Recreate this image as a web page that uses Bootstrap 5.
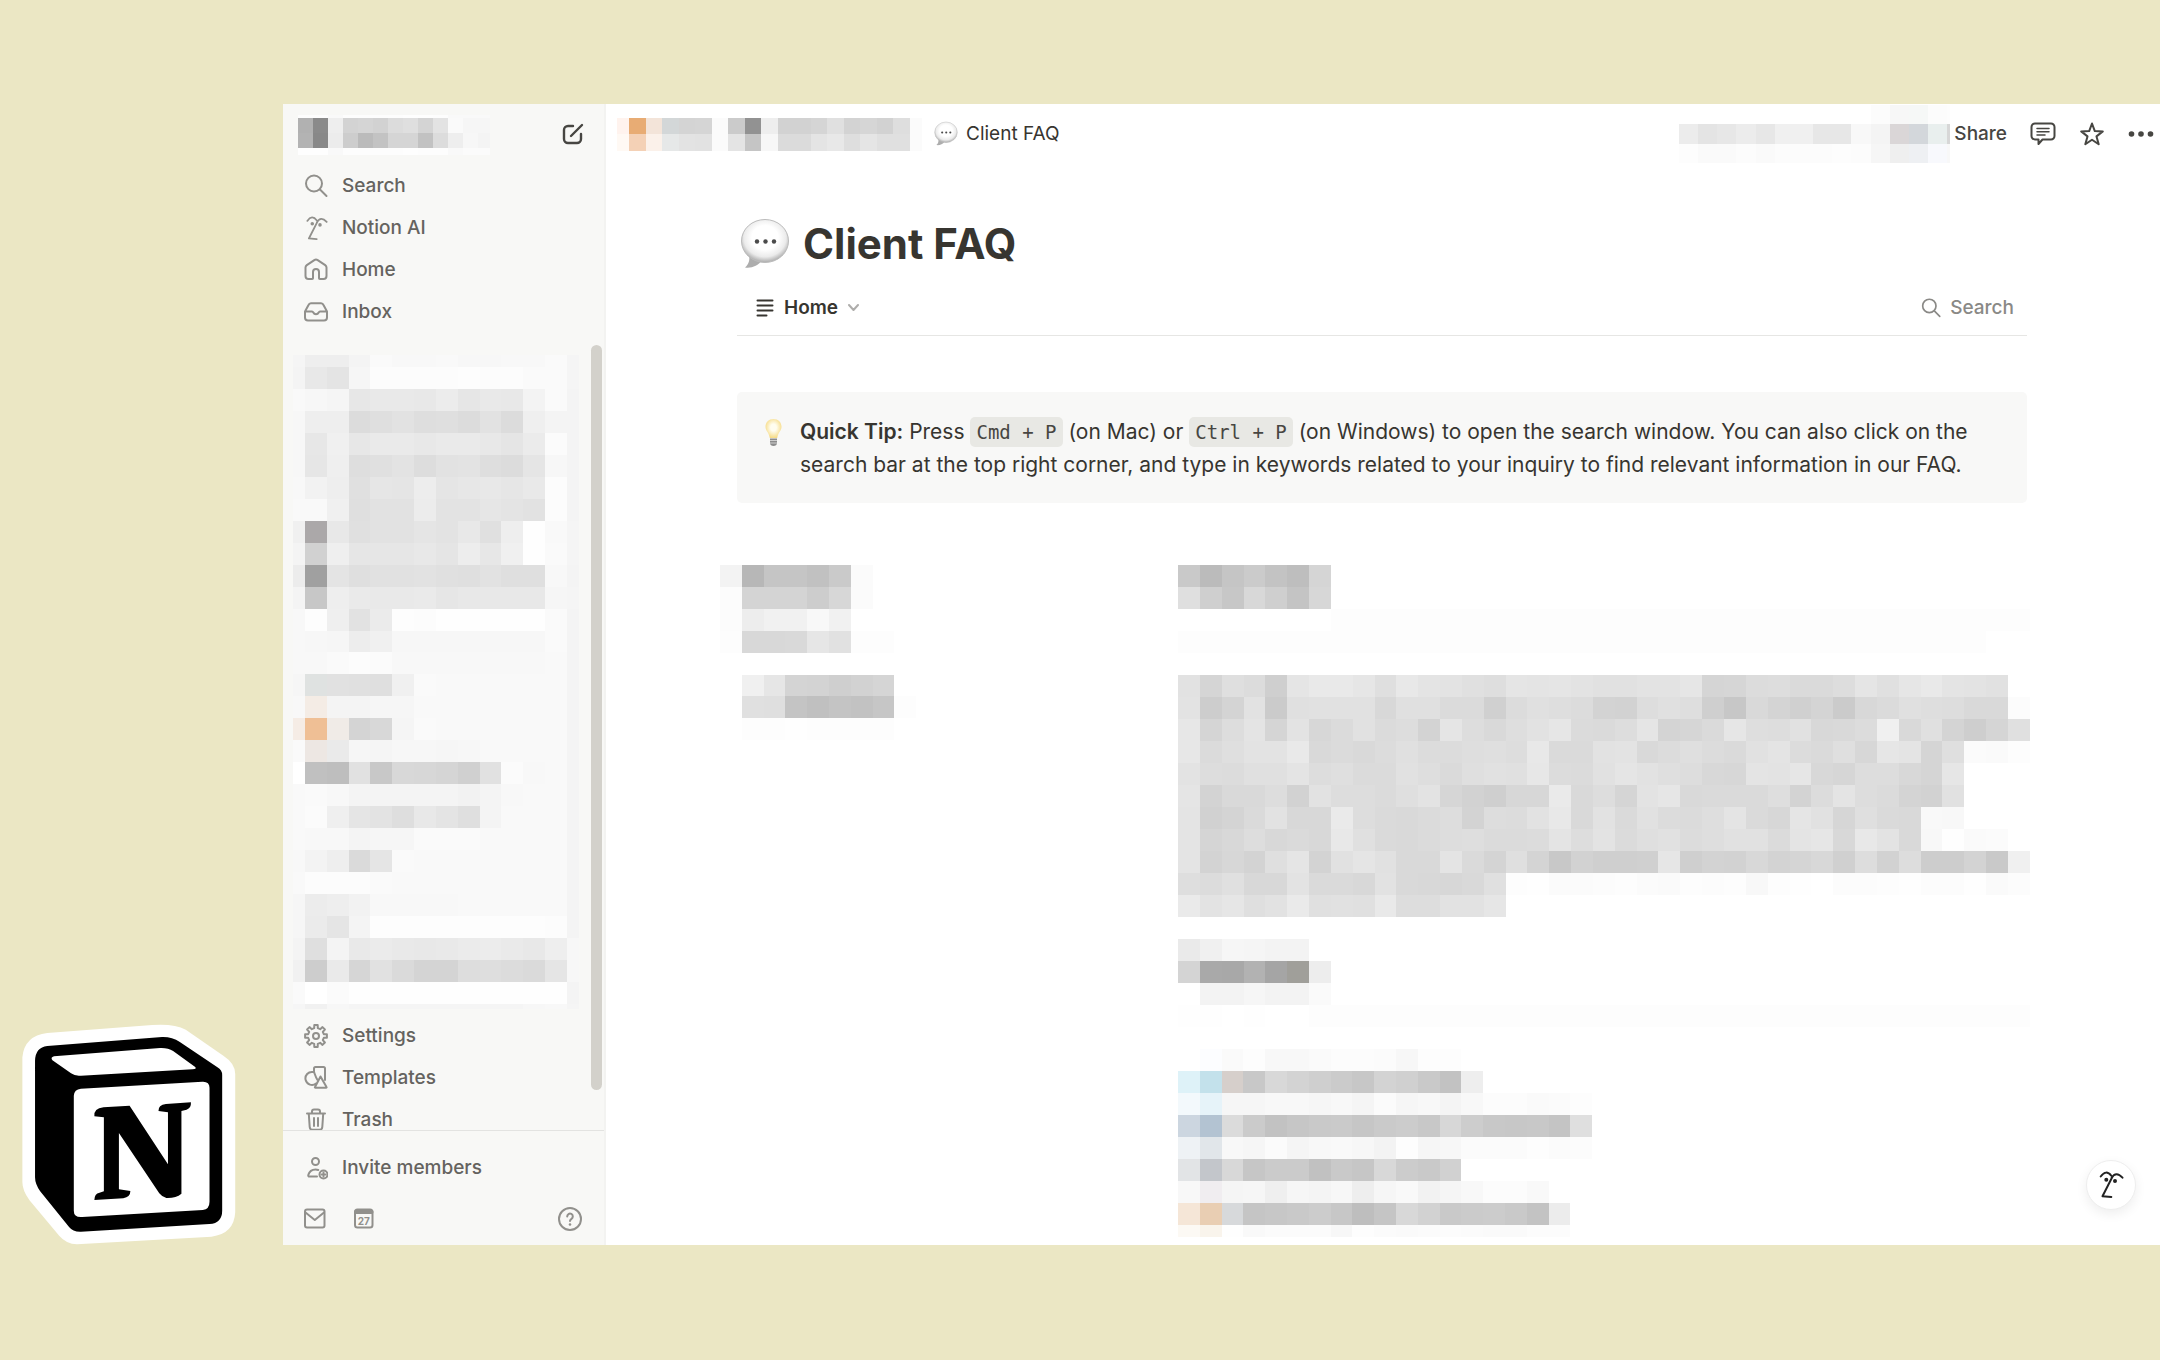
<!DOCTYPE html>
<html lang="en">
<head>
<meta charset="utf-8">
<meta name="viewport" content="width=device-width, initial-scale=1">
<title>Client FAQ</title>
<link href="https://cdn.jsdelivr.net/npm/bootstrap@5.3.0/dist/css/bootstrap.min.css" rel="stylesheet">
<style>
  body{background:#ebe7c4;color:#373530;font-family:Inter,"Liberation Sans",sans-serif;font-size:19px;line-height:28px}
  svg{display:block;flex:none}
  a,button{color:inherit;text-decoration:none}
  .stage{padding:104px 0 115px}
  .sticker-rail{width:283px;flex:none;padding-left:20px}
  .side{width:323px;flex:none;background:#f8f8f6;border-right:2px solid #f3f3f1;color:#65635f;font-weight:500}
  .side-head{height:61px;flex:none;padding:11px 19px 0 15px}
  .side-head button{color:#474642;margin-top:7px}
  .side-nav{min-height:0}
  .side-item{height:42px;padding-left:21px;gap:14px}
  .side nav svg.ico,.side-foot svg.ico{color:#91908c}
  .side-mosaic{margin:22px 0 6px 10px}
  .scroll-thumb{position:absolute;top:241px;right:2px;bottom:155px;width:11px;border-radius:6px;background:#d3d1cb}
  .side-foot{height:115px;flex:none;border-top:1px solid #e3e3e1;padding-top:16px}
  .foot-icons{padding:18px 22px 0 21px;gap:12px}
  .ico{fill:none;stroke:currentColor;stroke-width:2;stroke-linecap:round;stroke-linejoin:round}
  .plain{background:none;border:0;padding:0}
  .board{min-width:0}
  .top-line{height:59px;padding:1px 6px 0 11px}
  .top-right{gap:23px;color:#474642}
  .page{padding:55px 133px 0 131px}
  .title-row{gap:14px;padding-left:4px;height:52px}
  .title-row h1{font-size:42px;line-height:52px;font-weight:700;margin:0}
  .tab-line{height:56px;margin-top:10px;border-bottom:1px solid #e6e6e4;padding:0 13px 0 19px}
  .tab-line .home{gap:10px;font-weight:600}
  .tab-line .find{gap:9px;color:#8a8986;font-weight:500}
  .tip{margin-top:56px;background:#f8f8f7;border-radius:5px;padding:23px 24px 22px 28px;gap:18px;font-size:21px;line-height:33px}
  .tip p{margin:0}
  .tip strong{font-weight:600}
  .tip code{background:#e8e8e4;color:#474642;border-radius:5px;padding:4px 6px;font:19px/22px "DejaVu Sans Mono",monospace}
  .columns{margin-top:62px}
  .col-a{width:441px;flex:none}
  .col-a svg{margin-left:-17px}
  .blocks{gap:22px}
  .fab{position:absolute;right:24px;bottom:35px;width:50px;height:50px;border-radius:50%;background:#fff;border:1px solid #eee;box-shadow:0 4px 12px rgba(0,0,0,.07);color:#222}
</style>
</head>
<body>
<div class="stage d-flex vh-100 overflow-hidden">
  <div class="sticker-rail d-flex align-items-end">
    <svg width="218" height="221" viewBox="51 75 551 663" preserveAspectRatio="none" role="img" aria-label="Notion">
      <path fill="#fff" d="M120 102 L385 78 Q440 73 470 92 L565 170 Q595 193 595 225 L595 640 Q592 705 535 713 L195 736 Q168 735 150 710 L75 604 Q57 575 57 550 L57 175 Q62 110 120 102Z"/>
      <path fill="#000" d="M120 141 L410 114 Q435 113 455 129 L550 205 Q562 213 562 228 L562 635 Q562 672 530 675 L205 698 Q185 699 175 684 L102 577 Q89 555 89 535 L89 185 Q90 145 120 141Z"/>
      <path fill="#fff" d="M137 172 L405 147 Q425 146 438 156 L493 203 Q500 209 487 211 L205 230 Q190 232 180 223 L133 184 Q127 175 137 172Z"/>
      <path fill="#fff" d="M205 269 L512 248 Q530 247 530 266 L530 608 Q530 630 513 633 L208 654 Q187 656 187 635 L187 290 Q188 271 205 269Z"/>
      <path fill="#000" d="M239 352 Q237 328 262 325 L328 320 L425 496 L425 340 L401 336 Q400 318 420 315 L483 310 Q484 328 472 332 L459 336 L459 584 Q445 598 421 597 Q410 594 403 583 L301 402 L301 571 L330 576 Q330 594 312 598 L239 603 Q239 584 252 581 L263 577 L263 355Z"/>
    </svg>
  </div>

  <aside class="side d-flex flex-column position-relative">
    <div class="side-head d-flex justify-content-between align-items-start">
      <svg data-mosaic="workspace"></svg>
      <button class="plain" aria-label="New page">
        <svg class="ico" width="24" height="24" viewBox="0 0 24 24"><path stroke-width="2.400" d="M12 4H7a4 4 0 0 0-4 4v9a4 4 0 0 0 4 4h9a4 4 0 0 0 4-4v-5M10 14 21 3"/></svg>
      </button>
    </div>
    <nav class="side-nav flex-fill overflow-hidden">
      <a href="#" class="side-item d-flex align-items-center"><svg class="ico" width="24" height="24" viewBox="0 0 24 24"><circle cx="10" cy="9.500" r="8"/><path d="m16 15.500 6.500 6.500"/></svg>Search</a>
      <a href="#" class="side-item d-flex align-items-center"><svg class="ico" width="24" height="24" viewBox="-2 2 27 27"><use href="#face"/></svg>Notion AI</a>
      <a href="#" class="side-item d-flex align-items-center"><svg class="ico" width="24" height="24" viewBox="0 0 24 24"><path d="M1.500 9.600c0-1 .5-1.900 1.300-2.500l7.500-5a3 3 0 0 1 3.400 0l7.500 5c.8.6 1.300 1.500 1.300 2.500V18a3 3 0 0 1-3 3h-3.700a.8.800 0 0 1-.8-.8V14a3 3 0 0 0-6 0v6.200a.8.800 0 0 1-.8.800H4.500a3 3 0 0 1-3-3z"/></svg>Home</a>
      <a href="#" class="side-item d-flex align-items-center"><svg class="ico" width="24" height="24" viewBox="0 0 24 24"><path d="M1 11.500 4.500 5a3 3 0 0 1 2.500-1.800h10A3 3 0 0 1 19.500 5l3.500 6.500v6a3 3 0 0 1-3 3H4a3 3 0 0 1-3-3zM1 11.500H8c.6 0 1 .4 1.300 1a3 3 0 0 0 5.400 0c.3-.6.700-1 1.300-1h7"/></svg>Inbox</a>
      <svg class="side-mosaic" data-mosaic="tree"></svg>
      <a href="#" class="side-item d-flex align-items-center"><svg class="ico" width="24" height="24" viewBox="0 0 24 24"><circle cx="12" cy="12" r="3"/><path id="gear" d=""/></svg>Settings</a>
      <a href="#" class="side-item d-flex align-items-center"><svg class="ico" width="24" height="24" viewBox="0 0 24 24"><path d="M10 6V2.500a1.500 1.500 0 0 1 1.500-1.500h8A1.500 1.500 0 0 1 21 2.500V14M9 6a6.500 6.500 0 1 0 3 11.500M10 6c.5 1 1.500 5 3.500 8M16.500 10.500l6 10.500a.5.500 0 0 1-.5.800H11.500a.5.500 0 0 1-.5-.8z"/></svg>Templates</a>
      <a href="#" class="side-item d-flex align-items-center"><svg class="ico" width="24" height="24" viewBox="0 0 24 24"><path d="M3 5.500h18M8 5V3.500a2 2 0 0 1 2-2h4a2 2 0 0 1 2 2V5M4.800 6l.9 13a3 3 0 0 0 3 2.800h6.600a3 3 0 0 0 3-2.800l.9-13M10 10v8M14 10v8"/></svg>Trash</a>
    </nav>
    <div class="scroll-thumb"></div>
    <div class="side-foot">
      <a href="#" class="side-item d-flex align-items-center"><svg class="ico" width="24" height="24" viewBox="0 0 24 24"><circle cx="11.500" cy="5.500" r="3.500"/><path d="M13 20.500H5.500c-1 0-1.500-.7-1.200-1.600.9-3 3.700-5.400 7.200-5.400 1 0 2 .2 2.800.5"/><circle cx="19.500" cy="18.500" r="4"/><path d="M19.500 16.500v4M17.500 18.500h4"/></svg>Invite members</a>
      <div class="foot-icons d-flex">
        <button class="plain" aria-label="Mail"><svg class="ico" width="24" height="24" viewBox="0 0 24 24"><rect x="1" y="2.500" width="19.500" height="18" rx="2"/><path d="m1.500 5.500 9.300 7.500L20 5.500"/></svg></button>
        <button class="plain ms-1" aria-label="Calendar"><svg class="ico" width="40" height="24" viewBox="-8 0 40 24"><rect x="3" y="2.500" width="17.500" height="18" rx="2.500"/><path stroke-width="4" d="M4 5h15.500"/><text x="11.700" y="17.500" font-size="10" font-weight="700" text-anchor="middle" fill="#91908c" stroke="none">27</text></svg></button>
        <button class="plain ms-auto" aria-label="Help"><svg class="ico" width="24" height="24" viewBox="0 0 24 24"><circle cx="12" cy="12" r="11"/><path d="M9.200 9.500a2.800 2.800 0 1 1 4.300 2.300c-.9.600-1.500 1-1.500 2.200"/><path stroke-width="2.600" d="M12 17.500v0"/></svg></button>
      </div>
    </div>
  </aside>

  <main class="board flex-fill bg-white overflow-hidden position-relative">
    <header class="top-line d-flex align-items-center justify-content-between">
      <nav class="d-flex align-items-center" aria-label="Breadcrumb">
        <svg data-mosaic="crumbs"></svg>
        <svg class="ms-2 me-2 ps-1" width="28" height="26" viewBox="-1 0 50 51"><use href="#bubble"/></svg>
        <a href="#">Client FAQ</a>
      </nav>
      <div class="top-right d-flex align-items-center">
        <div class="d-flex align-items-center gap-1"><svg data-mosaic="people"></svg><button class="plain fw-medium">Share</button></div>
        <button class="plain" aria-label="Comments"><svg class="ico" width="26" height="26" viewBox="0 0 26 26"><path d="M5 2.500h16a3.500 3.500 0 0 1 3.500 3.500v9a3.500 3.500 0 0 1-3.500 3.500h-8.500L8.500 23v-4.500H5A3.500 3.500 0 0 1 1.500 15V6A3.500 3.500 0 0 1 5 2.500z"/><path stroke-width="1.500" d="M7 7.500h12M7 10.800h12M7 14.100h8"/></svg></button>
        <button class="plain" aria-label="Favorite"><svg class="ico" width="26" height="26" viewBox="0 0 26 26"><path d="m13 2.500 2.800 7.600 8 .3-6.300 5 2.200 7.900-6.700-4.600-6.700 4.600 2.200-7.900-6.300-5 8-.3z"/></svg></button>
        <button class="plain" aria-label="More"><svg width="26" height="26" viewBox="0 0 26 26" fill="currentColor"><circle cx="3.500" cy="13" r="2.800"/><circle cx="13" cy="13" r="2.800"/><circle cx="22.500" cy="13" r="2.800"/></svg></button>
      </div>
    </header>

    <section class="page">
      <div class="title-row d-flex align-items-center">
        <svg width="48" height="51" viewBox="0 0 48 51" aria-hidden="true">
          <defs>
            <radialGradient id="bub" cx=".5" cy=".42" r=".56"><stop offset=".5" stop-color="#fff"/><stop offset=".8" stop-color="#ebebeb"/><stop offset="1" stop-color="#b4b4b4"/></radialGradient>
            <g id="bubble"><path fill="#adadad" d="M8 36c1 5 0 9-4 12.500 7 1 13-2 17-7z"/><ellipse cx="24" cy="22" rx="23.500" ry="21.500" fill="url(#bub)" stroke="#bbb" stroke-width="1"/><g fill="#4a4a4a"><circle cx="16" cy="22.500" r="2.200"/><circle cx="24.500" cy="22.500" r="2.200"/><circle cx="33" cy="22.500" r="2.200"/></g></g>
            <g id="face"><path d="M1.700 7.500Q7 0 12.500 7M12.500 9Q17 1.500 23.500 8.700M13.300 8 3.500 27.300l8.800.7"/><circle cx="7.300" cy="10.800" r="1" fill="currentColor"/><circle cx="16" cy="12" r="1" fill="currentColor"/></g>
          </defs>
          <use href="#bubble"/>
        </svg>
        <h1>Client FAQ</h1>
      </div>

      <div class="tab-line d-flex align-items-center justify-content-between">
        <button class="plain home d-flex align-items-center">
          <svg class="ico" width="18" height="18" viewBox="0 0 18 18"><path d="M1.500 1.500h15M1.500 6.500h15M1.500 11.500h15M1.500 16.500h9"/></svg>Home
          <svg class="ico" width="11" height="11" viewBox="0 0 11 11" opacity=".4"><path d="m1 3 4.500 5L10 3"/></svg>
        </button>
        <button class="plain find d-flex align-items-center"><svg class="ico" width="20" height="20" viewBox="0 0 24 24"><circle cx="10" cy="9.500" r="8"/><path d="m16 15.500 6.500 6.500"/></svg>Search</button>
      </div>

      <div class="tip d-flex">
        <svg width="17" height="33" viewBox="0 0 17 33" aria-hidden="true">
          <defs><radialGradient id="glow" cx=".5" cy=".45" r=".6"><stop offset=".3" stop-color="#fffdf0"/><stop offset="1" stop-color="#f5d778"/></radialGradient></defs>
          <path fill="url(#glow)" d="M8.500 4C3.800 4 .5 7.400.5 11.700c0 4 3.500 5.800 4.300 11.300h7.400c.8-5.500 4.300-7.300 4.300-11.300C16.500 7.400 13.200 4 8.500 4z"/>
          <path fill="#8c8c8c" d="M5 23.500h7v4.500c0 2-1.500 3-3.500 3S5 30 5 28z"/><path stroke="#cfcfcf" d="M5 25.500h7M5 28h7"/>
        </svg>
        <p><strong>Quick Tip:</strong> Press <code>Cmd + P</code> (on Mac) or <code>Ctrl + P</code> (on Windows) to open the search window. You can also click on the search bar at the top right corner, and type in keywords related to your inquiry to find relevant information in our FAQ.</p>
      </div>

      <div class="columns d-flex">
        <div class="col-a"><svg data-mosaic="contents"></svg></div>
        <div class="blocks d-flex flex-column">
          <svg data-mosaic="headingA"></svg>
          <svg data-mosaic="paragraph"></svg>
          <svg data-mosaic="headingB"></svg>
          <div>
            <svg data-mosaic="links"></svg>
            <!-- tips of the next line, cut off by the window edge -->
            <svg class="mt-2" width="400" height="3" viewBox="0 0 400 3" aria-hidden="true"><path fill="#8fa9d6" d="M30 0h6v3h-6z"/><path fill="#9b9a97" d="M136 0h3v3h-3zM154 0h3v3h-3zM193 0h3v3h-3zM289 0h3v3h-3zM317 0h3v3h-3zM335 0h3v3h-3z"/></svg>
          </div>
        </div>
      </div>
    </section>
    <button class="plain fab d-flex align-items-center justify-content-center" aria-label="Ask AI"><svg class="ico" width="26" height="30" viewBox="-1 1 26 30"><use href="#face"/></svg></button>
  </main>
</div>
<script src="https://cdn.jsdelivr.net/npm/bootstrap@5.3.0/dist/js/bootstrap.bundle.min.js"></script>
<script>
  // Redacted areas. w/h: cell size, x0/y0: size of the first column/row, x9/y9: of the last.
  // A token is a grey level (2 hex digits) or a colour (6); "*n" repeats it, "." is clear.
  const mosaics = {
    workspace:{w:15,h:15,y0:3,y9:7,x9:12,rows:[
      'fd fd f9 fd*4 fe fe fd f9*3','b1 8a ee d3 d5 d2 dc df d4 e3 fa f6 f6','b3 88 ec cd bb c3 d5 d5 c2 dc ee f7 f4','fe fe f9 fd*4 fe fd fd f9 fb fb']},
    crumbs:{w:16.5,h:16.3,x0:12,x9:12,rows:[
      'fff3ee e8ac74 f3e4d9 d3d7d8 d4 d5 fb cb 92 ee d2 d2 d5 e0 d3 d6 d2 de fb',
      'fff9f4 f4d1b6 fbf1ea e6e8e8 e3 e2 fb e4 c5 f7 db db e4 e8 de e5 e0 e0 fb']},
    people:{w:19.15,h:19.3,x9:3,rows:[
      '.*10 fc f7 f6f8f7 fc fd','ec e4 e7 ec e7 f0 f0 e7 e7 f8 f4 dad6d7 d3d7db e9efee d7','fd fa fa fc fa fc fc fc fd fc f6 ef eef0f3 f8f9fd f8']},
    tree:{w:21.82,h:21.96,x0:12,x9:12,y0:12,y9:5,rows:[
      'f5 ee ee f4 fa f8 f8 f9 f7 f7 f8 f8 fa f5','f4 e8 e4 f6 fc*4 fd fc fc fa fa f5','f9 f7 f5 e7 e9 e9 e8 ec e6 e9 e8 f3 fa f4',
      'f7 ee ee dc df e2 de df dc e2 dc ef f4 f4','f7 e7 f0 e7 ea ea e8 ea ea e8 e5 eb fb f4','f7 e6 ef de e0 e3 dd e2 e3 de dc e5 f7 f4',
      'f8 f2 ee e0 e6 e5 ed e5 e7 e8 e6 e9 fc f4','f9 f9 f0 df e2 e2 ec e3 e3 e6 e4 e2 fc f4','f0 aba8a9 e8 e0 e2 e2 e5 e3 e8 e0 ee fe f9 f5',
      'f4 d1 ef e6 e6 e6 e8 e5 ed e7 f0 fe fa f5','ec a0 e4 df e1 e1 e2 e0 df e2 df df f8 f4','f4 c7 ee ea e9 e9 ea e6 e8*4 f6 f5',
      'f8 fd ef e2 eb fd fc fe*5 fa f4','f8 f7 f6 ed f0 f7*7 fa f4','f8 f8 fa fc fb f8*7 f9 f4',
      'f6 dfe2e1 e1 e0 df f0 fa f9*6 f4','f8 f4ece5 f4 f4 f6 f6 f9*7 f4','f5ece5 efbf95 f0ebe7 d4 d8 f5 fa f9*6 f4',
      'fa ede7e3 ea f6 f5 f7 f7 f6 f7 f9*4 f4','ff c0 be e1 c8 d8 d7 d5 d0 e1 fb f8 f9 f4','f9 fa f8 f4*5 f2 f4 f8 f9 f9 f4',
      'f9 fb ef e5 e3 de e8 e4 df f4 f9*3 f4','f9 f8 f8 f4 f6 f6 fa*3 f9*4 f4','f8 f3 ee da e5 fa f9*7 f4',
      'f9 fc fc fc fa f9*8 f4','f6 ec ee f2 f8*4 f9*5 f4','f6 eb e5 f4 fd*8 fc f4',
      'f4 df f4 e9 eb e9 e8 e9 eb ec ea e8 ee f7','f1 cd ea d6 e1 da d4 d4 dd de dc da e5 f7','fa ff fb fe*10 f4','f6 f1 f7 f5*8 f7 f8 f5']},
    contents:{w:21.8,h:21.9,rows:[
      'f3 b7 c5 c5 c1 ca fb','fc d4 d4 d4 cd d7 fb','fc ed f1 f1 f8 f1','fd d8 d8 d9 e6 e1 fd fd','.','. f0 e6 d4 d3 cf d2 d5','. e0 df c4 c0 c4 c2 c6 fd','. fd fd fe fd*4']},
    headingA:{w:21.84,h:21.9,rows:['c9 bb c5 cb c3 be d5','df cf c7 d8 cf c4 d7','.*7 fd*32','fd*37']},
    paragraph:{w:21.84,h:22,rows:[
      'e2 d5 df dc cf e5 e9 e9 e6 df e8 e4 e3 e0 de e5 e4 e5 e3 e1 e1 e3 e3 e6 d5 d6 dc dd da da dd e5 e0 e6 e9 e4 e3 e1',
      'e3 cd d4 e2 cb e0 e1 e1 e1 d8 e0 e0 db db d0 dc e0 de dc d3 d2 dd e0 de cf c7 d9 d4 d0 d4 cb d8 db e0 de dd d9 d9 fc',
      'e7 d5 dd e4 d5 e3 d7 db e1 db dd d3 e5 dd d9 de e2 e6 db da dd e5 d4 d6 da e6 de dd e1 d8 d9 dc f0 d9 e0 d4 ce d5 e0',
      'e7 db df e3 e3 e9 d9 db d9 dc e0 dc dc de df dd e8 da da e2 e3 d9 dc df dc da e1 e4 dc da df d7 e6 e4 d5 df fb fa fd',
      'e3 dd dc e0 e0 e4 dd df db db e1 de da df e1 e0 e7 dc db e1 e5 e2 df dd d8 d7 e4 e3 e6 d8 d6 dd dd d8 d5 e6',
      'e5 d3 d9 d9 dd d2 e2 dd dd db df e3 d6 d2 cf d7 d7 ea d9 dd d5 e3 e6 d9 da da da de d3 dc e4 dd db d4 d2 e1',
      'e4 d1 d4 da e2 d8 d8 ea dd da d9 db dd d3 dd dc e2 e8 d9 e2 da e1 dc db de e4 da d7 e5 e1 d6 df da d9 f9 f8',
      'e4 d5 d8 dd d8 da d8 e8 e0 da d9 db dd de db db dc e4 dd e3 db df e1 dc de e1 e1 db e4 e6 d8 e8 e3 d9 f8 fe fa fb',
      'e4 d3 d7 d3 df e5 d3 e1 e5 e1 d9 d9 e4 da d4 df d4 c8 d2 cf cf d0 e6 cf d3 d2 d8 d3 d5 d8 d0 dd d2 dd cd cd d3 c9 f0',
      'de dc e0 d8 d8 e3 da da d8 e2 d9 d8 d7 d9 e0 fd fe fb fb fc fd fb fa fd fc fd f8 fd fe ff fc fc fd fe fc fc fe fa fc',
      'ea e3 e6 df e2 ea e0 e1 e0 e9 dd dd e2 e2 e6']},
    headingB:{w:21.84,h:21.9,rows:['ea f0 f6 f5 f3 f3','d4 a9 a8 b2 a5 a09f9a ed','. f3 f3 f6 f3 f3 fa','fe fe . fe . . fd*33']},
    links:{w:21.8,h:21.94,y9:12,rows:[
      '. fcfdff fa fd f8 f8 fa fc fc fb f7 fd fd','def2f8 c3e1eb d6cfcb c8 d8 d3 cf cb c7 d3 d0 c9 c2 ee',
      'f3f9fc e6f3f9 f6 f6 f8 f8 f6 f8 f5 fb f6 f8 f4 f8 fc fc fa fb fd','ccd6e0 b3c3d2 db cb c2 c6 c9 ca c6 ca cc c8 d7 cd c8 c7 c8 c4 df',
      'eef2f5 e1e6ea f8 f6 fb f5 f8 f9 f7 f3 fd f6 f7 fb fb fb fd fb fc','e2e4e6 c3c6cb d8 c6 cb cb c1 c9 c6 d8 cc c9 d1',
      'f8 f0edf0 f5 f6 ef f6 f4 f7 ee f6 f9 f2 f5 f8 fc fc f9','f5e6d7 e9ceb3 d7d9db c5 c7 c9 cc c7 be c5 d8 d2 c9 cb cc c9 c3 ec',
      'fcf9f4 f9f4ec fe f9 fb fb fb f7 fd fb fa fb fc fb fa fa fc fc']}
  };
  document.querySelectorAll('[data-mosaic]').forEach(svg => {
    const m = mosaics[svg.dataset.mosaic];
    const rows = m.rows.map(r => r.split(' ').flatMap(t => { const [c, n] = t.split('*'); return Array(+n || 1).fill(c); }));
    const cols = Math.max(...rows.map(r => r.length));
    const edges = (count, size, first, last) => {
      const e = [0];
      for (let i = 0; i < count; i++) e.push(e[i] + (i === 0 && first ? first : i === count - 1 && last ? last : size));
      return e.map(Math.round);
    };
    const xs = edges(cols, m.w, m.x0, m.x9), ys = edges(rows.length, m.h, m.y0, m.y9);
    svg.setAttribute('width', xs[cols]); svg.setAttribute('height', ys[rows.length]);
    svg.setAttribute('aria-hidden', 'true');
    svg.innerHTML = rows.map((r, j) => r.map((c, i) => c === '.' ? '' :
      `<rect x="${xs[i]}" y="${ys[j]}" width="${xs[i+1]-xs[i]}" height="${ys[j+1]-ys[j]}" fill="#${c.length === 2 ? c + c + c : c}"/>`).join('')).join('');
  });
  // Gear outline with eight teeth.
  const pts = [];
  for (let i = 0; i < 8; i++) [[-13, 8], [-9, 11], [9, 11], [13, 8]].forEach(([d, r]) => {
    const a = (i * 45 + d) * Math.PI / 180; pts.push((12 + r * Math.sin(a)).toFixed(1) + ' ' + (12 - r * Math.cos(a)).toFixed(1)); });
  document.getElementById('gear').setAttribute('d', 'M' + pts.join('L') + 'z');
</script>
</body>
</html>
